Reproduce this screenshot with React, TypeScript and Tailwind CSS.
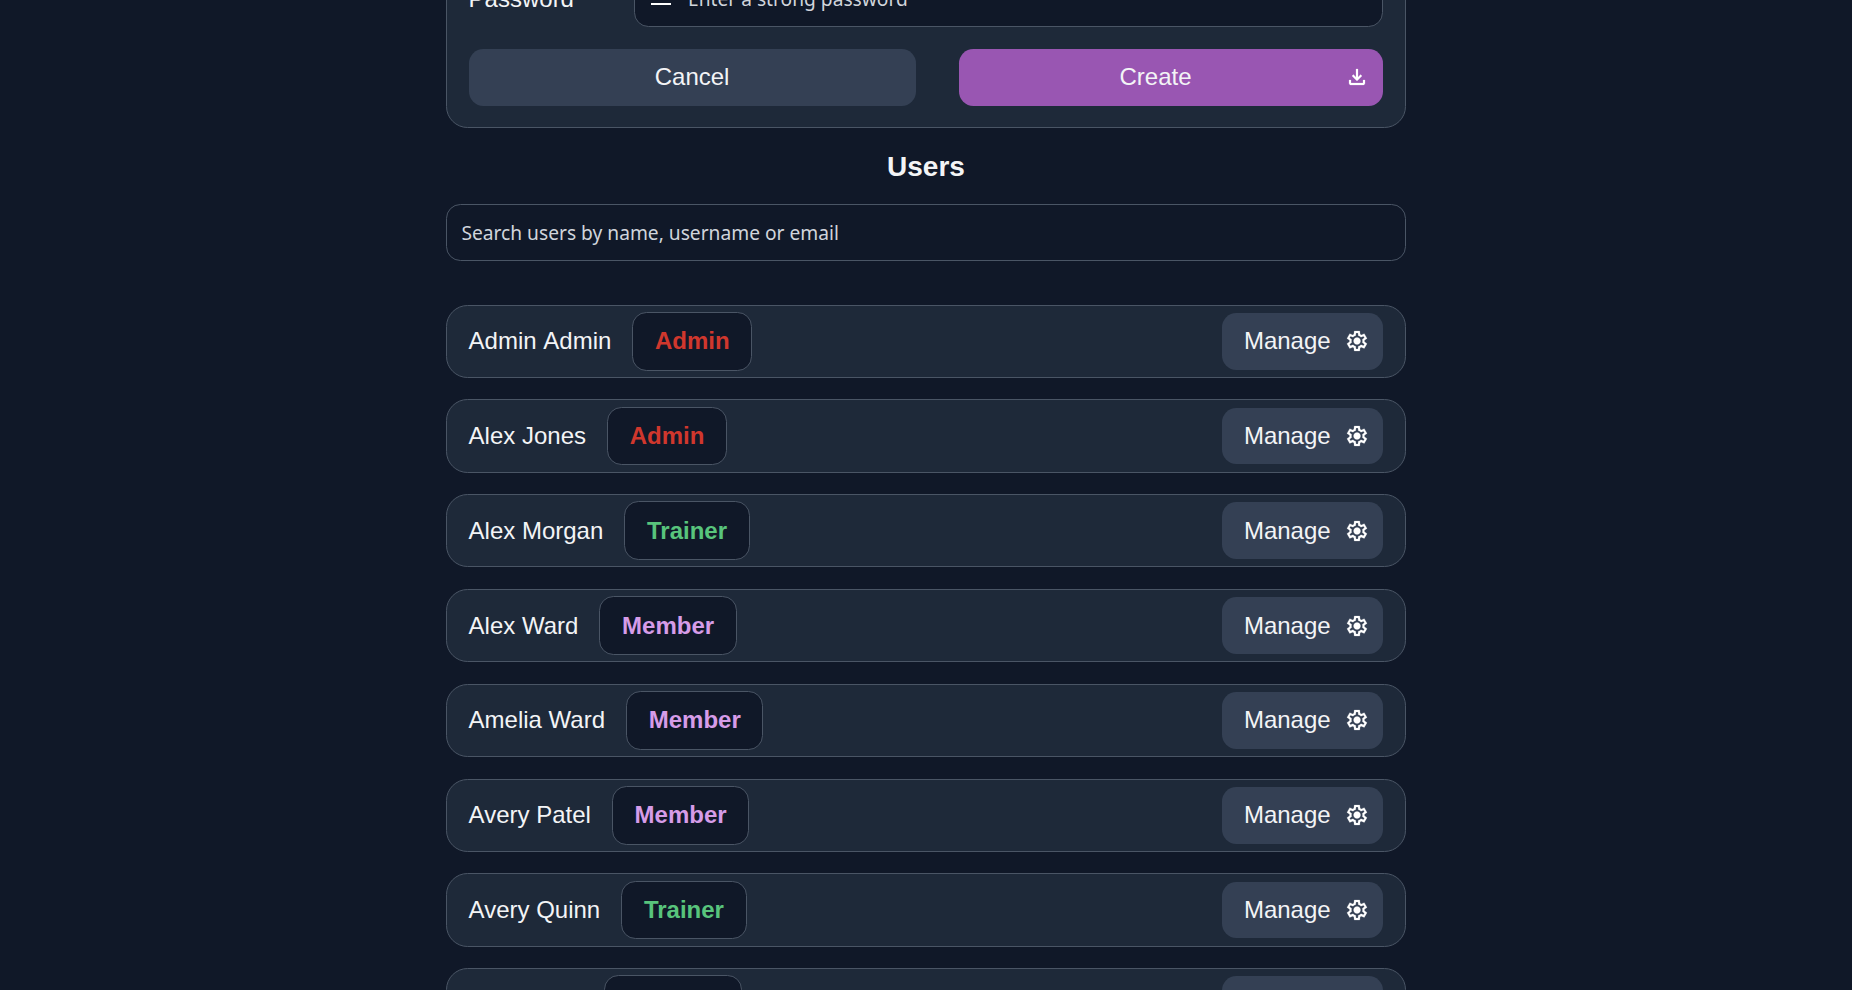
type Role = "Admin" | "Trainer" | "Member";

const users: { first: string; last: string; role: Role }[] = [
  { first: "Admin", last: "Admin", role: "Admin" },
  { first: "Alex", last: "Jones", role: "Admin" },
  { first: "Alex", last: "Morgan", role: "Trainer" },
  { first: "Alex", last: "Ward", role: "Member" },
  { first: "Amelia", last: "Ward", role: "Member" },
  { first: "Avery", last: "Patel", role: "Member" },
  { first: "Avery", last: "Quinn", role: "Trainer" },
  { first: "Bailey", last: "Cox", role: "Member" },
];

const roleColor: Record<Role, string> = {
  Admin: "text-[#d0372d]",
  Trainer: "text-[#58c47c]",
  Member: "text-[#d69ce8]",
};

function GearIcon() {
  return (
    <svg viewBox="0 -960 960 960" className="size-6 shrink-0 fill-white stroke-white stroke-[8]">
      <path d="m370-80-16-128q-13-5-24.500-12T307-235l-119 50L78-375l103-78q-1-7-1-13.500v-27q0-6.500 1-13.500L78-585l110-190 119 50q11-8 23-15t24-12l16-128h220l16 128q13 5 24.500 12t22.500 15l119-50 110 190-103 78q1 7 1 13.500v27q0 6.500-2 13.500l103 78-110 190-118-50q-11 8-23 15t-24 12L590-80H370Zm70-80h79l14-106q31-8 57.500-23.500T639-327l99 41 39-68-86-65q5-14 7-29.500t2-31.500q0-16-2-31.500t-7-29.500l86-65-39-68-99 42q-22-23-48.500-38.500T533-694l-13-106h-79l-14 106q-31 8-57.500 23.500T321-633l-99-41-39 68 86 64q-5 15-7 30t-2 32q0 16 2 31t7 30l-86 65 39 68 99-42q22 23 48.500 38.500T427-266l13 106Zm42-180q58 0 99-41t41-99q0-58-41-99t-99-41q-59 0-99.500 41T342-480q0 58 40.500 99t99.500 41Z" />
    </svg>
  );
}

function DownloadIcon() {
  return (
    <svg viewBox="0 -960 960 960" className="size-6 shrink-0 fill-white stroke-white stroke-[8]">
      <path d="M480-320 280-520l56-58 104 104v-326h80v326l104-104 56 58-200 200ZM240-160q-33 0-56.500-23.500T160-240v-120h80v120h480v-120h80v120q0 33-23.500 56.500T720-160H240Z" />
    </svg>
  );
}

function PasswordIcon() {
  return (
    <svg viewBox="0 -960 960 960" className="mb-[1.6px] -ml-px size-6 shrink-0 fill-white">
      <path d="M80-200v-80h800v80H80Zm46-242-52-30 34-60H40v-60h68l-34-58 52-30 34 58 34-58 52 30-34 58h68v60h-68l34 60-52 30-34-60-34 60Z" />
    </svg>
  );
}

function UserRow({ first, last, role }: { first: string; last: string; role: Role }) {
  return (
    <li className="flex h-[73.2px] shrink-0 items-center rounded-[21.6px] border border-[#4a5565] bg-[#1e2939] px-[21.6px]">
      <span className="flex gap-[6.67px]">
        <span>{first}</span>
        <span>{last}</span>
      </span>
      <span
        className={`ml-[21.1px] flex h-[58.8px] items-center rounded-[14.4px] border border-[#4a5565] bg-[#101828] px-[21.6px] font-bold ${roleColor[role]}`}
      >
        {role}
      </span>
      <button className="ml-auto flex h-[56.8px] items-center gap-[14.4px] rounded-[14.4px] bg-[#344054] pr-[14.4px] pl-[21.6px]">
        Manage
        <GearIcon />
      </button>
    </li>
  );
}

export default function App() {
  return (
    <div className="h-[990px] overflow-hidden bg-[#101828] font-['Liberation_Sans',Arial,sans-serif] text-[24px] leading-[28px] text-gray-100">
      <main className="mx-auto flex w-[960px] flex-col">
        <section className="-mt-[60px] flex h-[188.2px] shrink-0 flex-col justify-end gap-[21.6px] rounded-[21.6px] border border-[#4a5565] bg-[#1e2939] px-[21.6px] pb-[21.6px]">
          <div className="flex items-center justify-between">
            <span>Password</span>
            <div className="flex h-[56.8px] w-[749px] items-center gap-[14.4px] rounded-[14.4px] border border-[#4a5565] bg-[#101828] px-[14.4px]">
              <PasswordIcon />
              <input
                className="ml-[0.8px] min-w-0 flex-1 font-['Noto_Sans',sans-serif] text-[19.2px] outline-none placeholder:text-[#d1d5dc]"
                placeholder="Enter a strong password"
              />
            </div>
          </div>
          <div className="flex gap-[43.2px]">
            <button className="h-[56.8px] w-[447px] rounded-[14.4px] bg-[#344054]">Cancel</button>
            <button className="flex h-[56.8px] flex-1 items-center rounded-[14.4px] bg-[#9956b2] pr-[14.4px] pl-[21.6px]">
              <span className="flex-1 pr-[14.4px]">Create</span>
              <DownloadIcon />
            </button>
          </div>
        </section>
        <h2 className="mt-[21.6px] text-center text-[28px] leading-[33px] font-bold">Users</h2>
        <input
          className="mt-[21.2px] h-[56.8px] rounded-[14.4px] border border-[#4a5565] px-[14.4px] font-['Noto_Sans',sans-serif] text-[19.2px] outline-none placeholder:text-[#d1d5dc]"
          placeholder="Search users by name, username or email"
        />
        <ul className="mt-[43.9px] flex flex-col gap-[21.6px]">
          {users.map((user) => (
            <UserRow key={`${user.first} ${user.last}`} {...user} />
          ))}
        </ul>
      </main>
    </div>
  );
}
